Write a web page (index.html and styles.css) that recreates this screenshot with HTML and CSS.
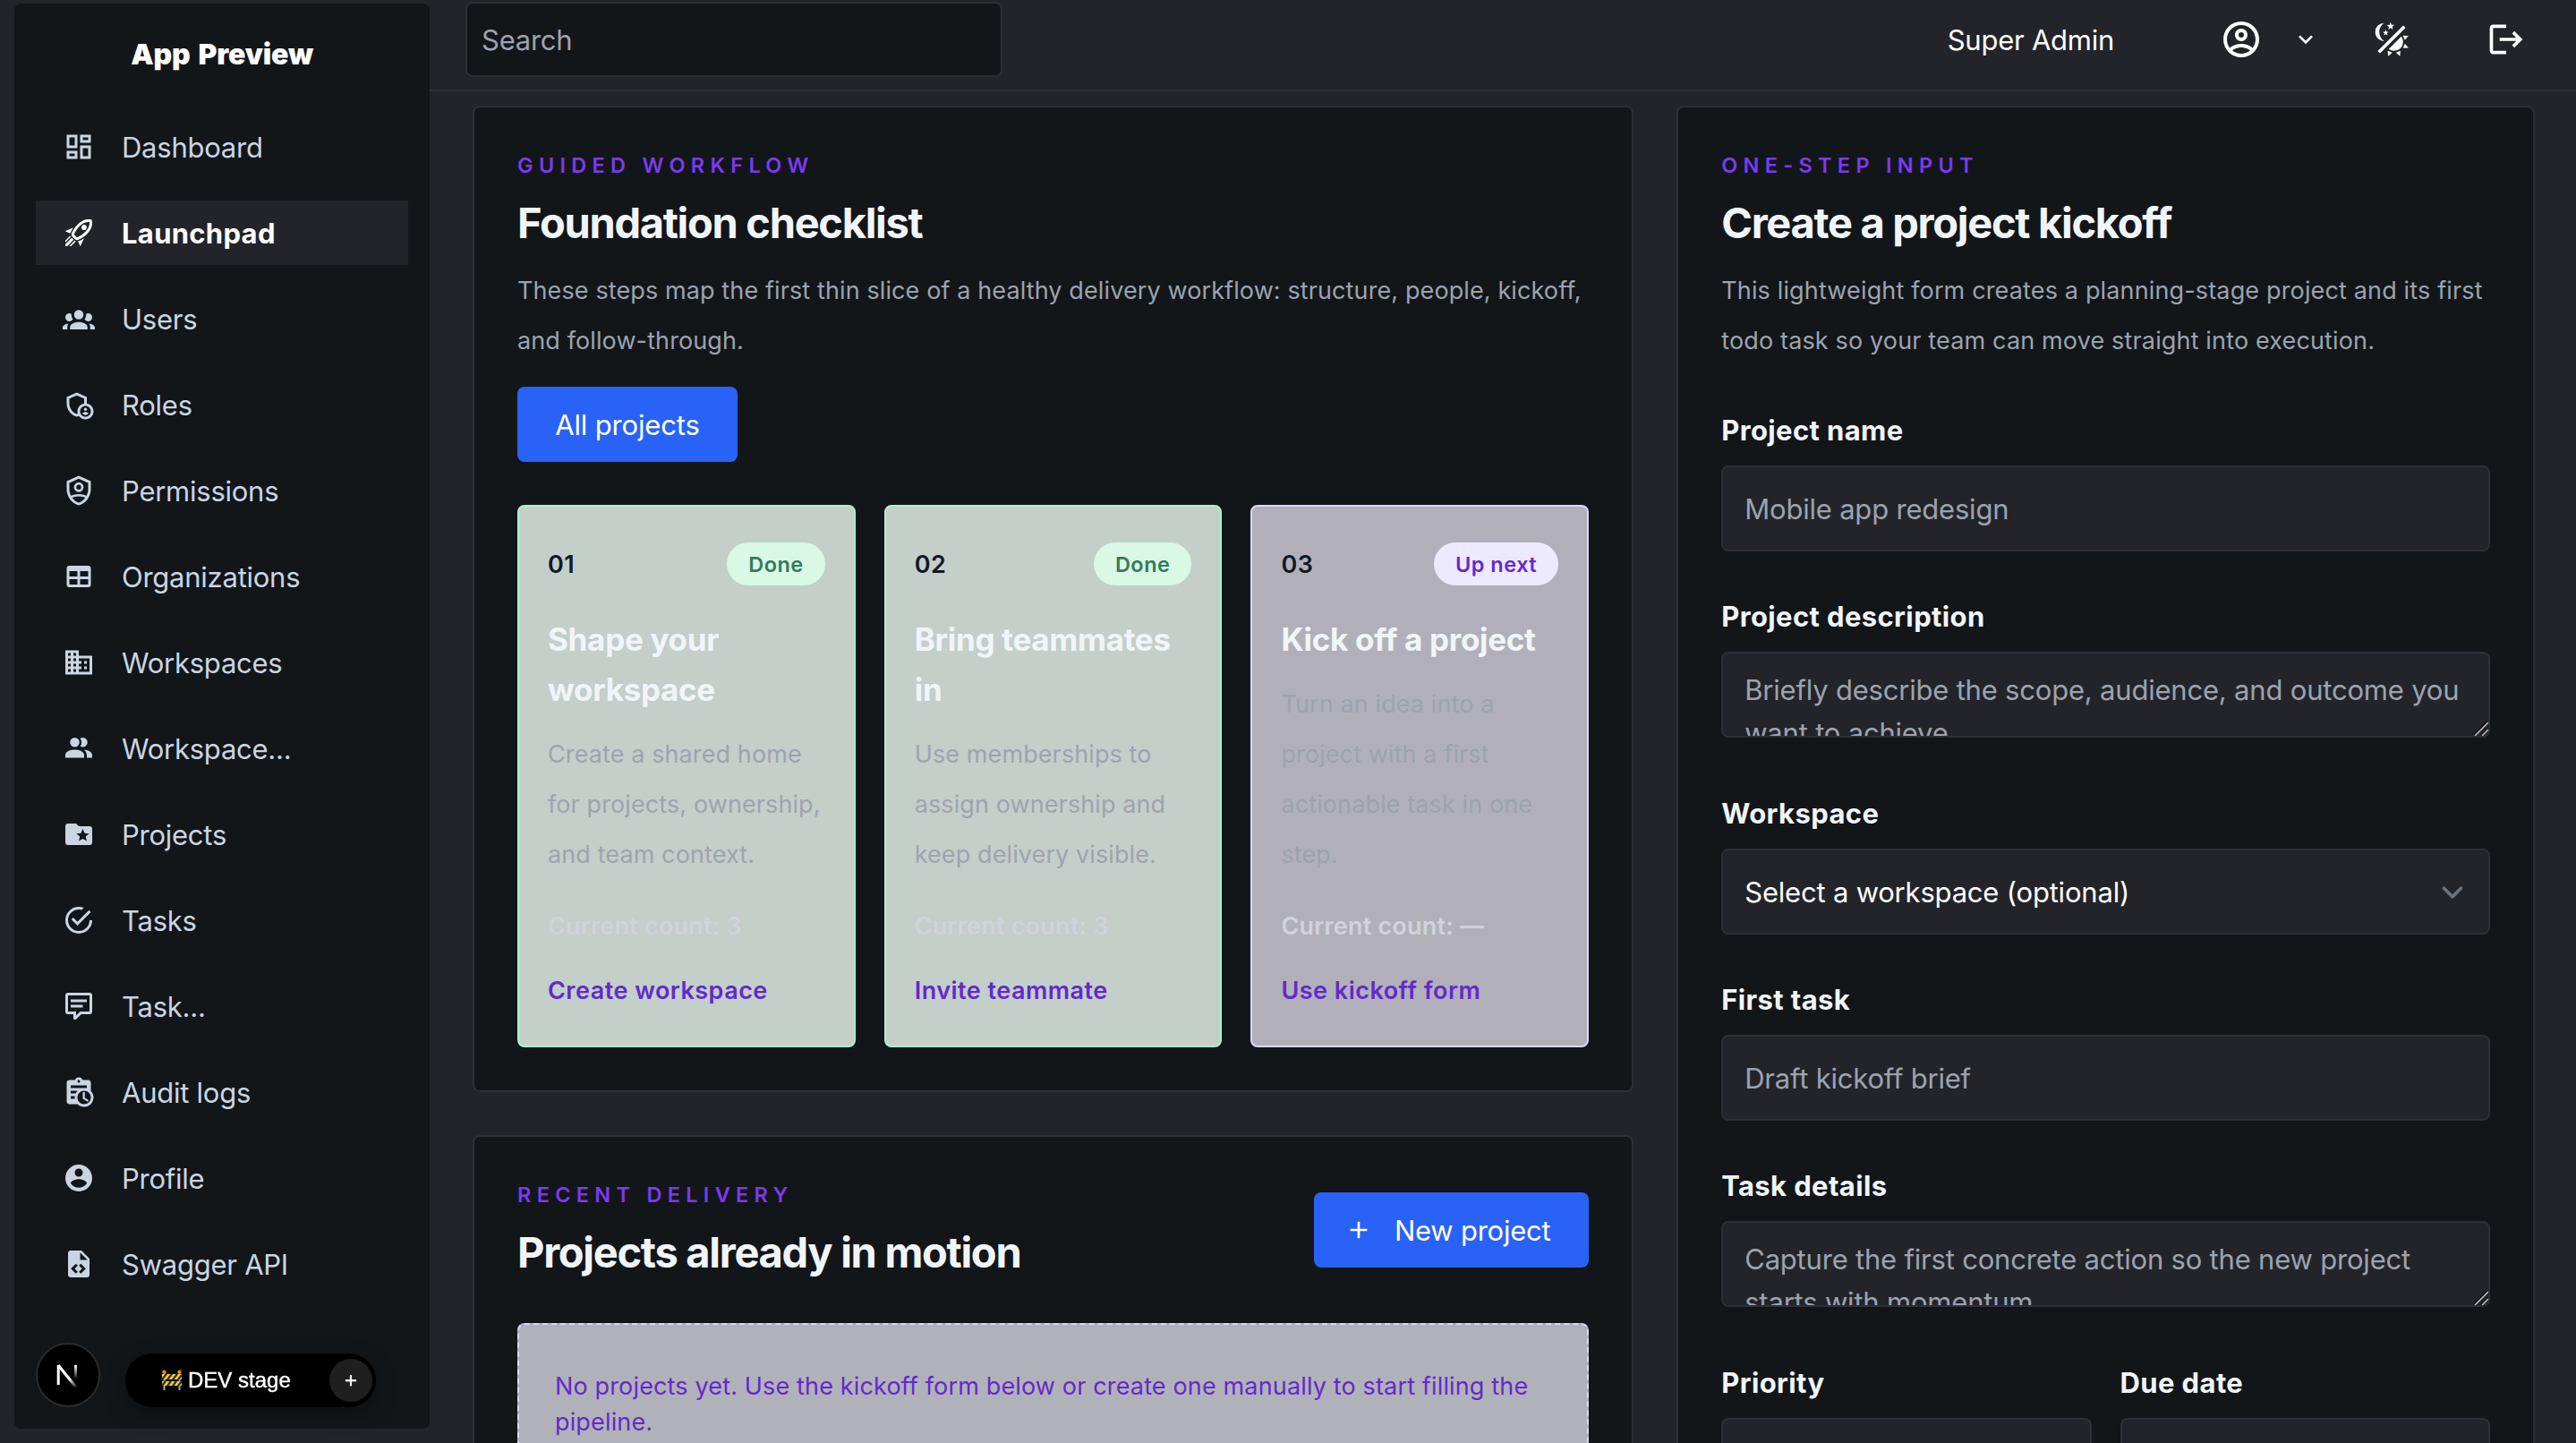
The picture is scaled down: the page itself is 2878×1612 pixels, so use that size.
FILE: index.html
```html
<!DOCTYPE html>
<html lang="en">
<head>
    <meta charset="UTF-8">
    <meta name="viewport" content="width=device-width, initial-scale=1.0">
    <title>Launchpad</title>
    <link rel="stylesheet" href="styles.css">
</head>
<body>
    <aside class="sidebar">
        <div class="brand">App Preview</div>
        <nav class="menu">
            <a class="menu-item">
                <svg class="icon" viewBox="0 0 24 24"><path d="M19,5V7H15V5H19M9,5V11H5V5H9M19,13V19H15V13H19M9,17V19H5V17H9M21,3H13V9H21V3M11,3H3V13H11V3M21,11H13V21H21V11M11,15H3V21H11V15Z"/></svg>
                <span>Dashboard</span>
            </a>
            <a class="menu-item active">
                <svg class="icon" viewBox="0 0 24 24"><path d="M13.13 22.19L11.5 18.36C13.07 17.78 14.54 17 15.9 16.09L13.13 22.19M5.64 12.5L1.81 10.87L7.91 8.1C7 9.46 6.22 10.93 5.64 12.5M19.22 4C19.5 4 19.75 4 19.96 4.05C20.13 5.44 19.94 8.3 16.66 11.58C14.96 13.29 12.93 14.6 10.65 15.47L8.5 13.37C9.42 11.06 10.73 9.03 12.42 7.34C15.18 4.58 17.64 4 19.22 4M19.22 2C17.24 2 14.24 2.69 11 5.93C8.81 8.12 7.5 10.53 6.65 12.64C6.37 13.39 6.56 14.21 7.11 14.77L9.24 16.89C9.62 17.27 10.13 17.5 10.66 17.5C10.89 17.5 11.13 17.44 11.36 17.35C13.5 16.53 15.88 15.19 18.07 13C23.73 7.34 21.61 2.39 21.61 2.39S20.7 2 19.22 2M14.54 9.46C13.76 8.68 13.76 7.41 14.54 6.63S16.59 5.85 17.37 6.63C18.14 7.41 18.15 8.68 17.37 9.46C16.59 10.24 15.32 10.24 14.54 9.46M6.24 22L9.88 18.36C9.54 18.27 9.21 18.12 8.91 17.91L4.83 22H6.24M2 22H3.41L8.18 17.24L6.76 15.83L2 20.59V22M2 19.17L6.09 15.09C5.88 14.79 5.73 14.47 5.64 14.12L2 17.76V19.17Z"/></svg>
                <span>Launchpad</span>
            </a>
            <a class="menu-item">
                <svg class="icon" viewBox="0 0 24 24"><path d="M12,5.5A3.5,3.5 0 0,1 15.5,9A3.5,3.5 0 0,1 12,12.5A3.5,3.5 0 0,1 8.5,9A3.5,3.5 0 0,1 12,5.5M5,8C5.56,8 6.08,8.15 6.53,8.42C6.38,9.85 6.8,11.27 7.66,12.38C7.16,13.34 6.16,14 5,14A3,3 0 0,1 2,11A3,3 0 0,1 5,8M19,8A3,3 0 0,1 22,11A3,3 0 0,1 19,14C17.84,14 16.84,13.34 16.34,12.38C17.2,11.27 17.62,9.85 17.47,8.42C17.92,8.15 18.44,8 19,8M5.5,18.25C5.5,16.18 8.41,14.5 12,14.5C15.59,14.5 18.5,16.18 18.5,18.25V20H5.5V18.25M0,20V18.5C0,17.11 1.89,15.94 4.45,15.6C3.86,16.28 3.5,17.22 3.5,18.25V20H0M24,20H20.5V18.25C20.5,17.22 20.14,16.28 19.55,15.6C22.11,15.94 24,17.11 24,18.5V20Z"/></svg>
                <span>Users</span>
            </a>
            <a class="menu-item">
                <svg class="icon" viewBox="0 0 24 24"><path fill-rule="evenodd" d="M18,11.09V6.27L10.5,3L3,6.27v4.91c0,4.54 3.2,8.79 7.5,9.82c.55-.13 1.08-.32 1.6-.55C13.18,21.99 14.97,23 17,23c3.31,0 6-2.69 6-6C23,14.03 20.84,11.57 18,11.09zM11,17c0,.56 .08,1.11 .23,1.62c-.24,.11-.48,.22-.73,.3c-3.17-1-5.5-4.24-5.5-7.74v-3.6l5.5-2.4l5.5,2.4v3.51C13.16,11.57 11,14.03 11,17zM17,21c-2.21,0-4-1.79-4-4s1.79-4 4-4s4,1.79 4,4S19.21,21 17,21z"/><circle cx="17" cy="15.5" r="1.12"/><path d="M17,17.5c-.73,0-2.19,.36-2.24,1.08c.5,.71 1.32,1.17 2.24,1.17s1.74-.46 2.24-1.17C19.19,17.86 17.73,17.5 17,17.5z"/></svg>
                <span>Roles</span>
            </a>
            <a class="menu-item">
                <svg class="icon" viewBox="0 0 24 24"><path fill-rule="evenodd" d="M21,11C21,16.55 17.16,21.74 12,23C6.84,21.74 3,16.55 3,11V5L12,1L21,5V11M12,21C15.75,20 19,15.54 19,11.22V6.3L12,3.18L5,6.3V11.22C5,15.54 8.25,20 12,21Z"/><circle class="line" cx="12" cy="9.5" r="2.7"/><path class="line" d="M6 17.2C7.4 16 10 15.5 12 15.5S16.6 16 18 17.2"/></svg>
                <span>Permissions</span>
            </a>
            <a class="menu-item">
                <svg class="icon" viewBox="0 0 24 24"><path d="M5,4H19A2,2 0 0,1 21,6V18A2,2 0 0,1 19,20H5A2,2 0 0,1 3,18V6A2,2 0 0,1 5,4M5,8V12H11V8H5M13,8V12H19V8H13M5,14V18H11V14H5M13,14V18H19V14H13Z"/></svg>
                <span>Organizations</span>
            </a>
            <a class="menu-item">
                <svg class="icon" viewBox="0 0 24 24"><path d="M18,15H16V17H18M18,11H16V13H18M20,19H12V17H14V15H12V13H14V11H12V9H20M10,7H8V5H10M10,11H8V9H10M10,15H8V13H10M10,19H8V17H10M6,7H4V5H6M6,11H4V9H6M6,15H4V13H6M6,19H4V17H6M12,7V3H2V21H22V7H12Z"/></svg>
                <span>Workspaces</span>
            </a>
            <a class="menu-item">
                <svg class="icon" viewBox="0 0 24 24"><path d="M16 17V19H2V17S2 13 9 13 16 17 16 17M12.5 7.5A3.5 3.5 0 1 0 9 11A3.5 3.5 0 0 0 12.5 7.5M15.94 13A5.32 5.32 0 0 1 18 17V19H22V17S22 13.37 15.94 13M15 4A3.39 3.39 0 0 0 13.07 4.59A5 5 0 0 1 13.07 10.41A3.39 3.39 0 0 0 15 11A3.5 3.5 0 0 0 15 4Z"/></svg>
                <span>Workspace...</span>
            </a>
            <a class="menu-item">
                <svg class="icon" viewBox="0 0 24 24"><path d="M20,6H12L10,4H4A2,2 0 0,0 2,6V18A2,2 0 0,0 4,20H20A2,2 0 0,0 22,18V8A2,2 0 0,0 20,6M17.94,17L15,15.28L12.06,17L12.84,13.67L10.25,11.43L13.66,11.14L15,8L16.34,11.14L19.75,11.43L17.16,13.67L17.94,17Z"/></svg>
                <span>Projects</span>
            </a>
            <a class="menu-item">
                <svg class="icon" viewBox="0 0 24 24"><path d="M20,12A8,8 0 0,1 12,20A8,8 0 0,1 4,12A8,8 0 0,1 12,4C12.76,4 13.5,4.11 14.2,4.31L15.77,2.74C14.61,2.26 13.34,2 12,2A10,10 0 0,0 2,12A10,10 0 0,0 12,22A10,10 0 0,0 22,12M7.91,10.08L6.5,11.5L11,16L21,6L19.59,4.58L11,13.17L7.91,10.08Z"/></svg>
                <span>Tasks</span>
            </a>
            <a class="menu-item">
                <svg class="icon" viewBox="0 0 24 24"><path d="M9,22A1,1 0 0,1 8,21V18H4A2,2 0 0,1 2,16V4C2,2.89 2.9,2 4,2H20A2,2 0 0,1 22,4V16A2,2 0 0,1 20,18H13.9L10.2,21.71C10,21.9 9.75,22 9.5,22V22H9M10,16V19.08L13.08,16H20V4H4V16H10M6,7H18V9H6V7M6,11H15V13H6V11Z"/></svg>
                <span>Task...</span>
            </a>
            <a class="menu-item">
                <svg class="icon" viewBox="0 0 24 24"><path fill-rule="evenodd" d="M21 11.11V5C21 3.9 20.11 3 19 3H14.82C14.4 1.84 13.3 1 12 1S9.6 1.84 9.18 3H5C3.9 3 3 3.9 3 5V19C3 20.11 3.9 21 5 21H11.11C12.37 22.24 14.09 23 16 23C19.87 23 23 19.87 23 16C23 14.09 22.24 12.37 21 11.11M12 3C12.55 3 13 3.45 13 4S12.55 5 12 5 11 4.55 11 4 11.45 3 12 3M6 7H18V9H6V7M6 11H11.1C10.5 11.6 10 12.3 9.68 13H6V11M6 15H9.08C9 15.7 9 16.3 9.08 17H6V15M16 21C13.24 21 11 18.76 11 16S13.24 11 16 11 21 13.24 21 16 18.76 21 16 21M16.5 16.25L19.36 17.94L18.61 19.16L15 17V12H16.5V16.25Z"/></svg>
                <span>Audit logs</span>
            </a>
            <a class="menu-item">
                <svg class="icon" viewBox="0 0 24 24"><path d="M12,19.2C9.5,19.2 7.29,17.92 6,16C6.03,14 10,12.9 12,12.9C14,12.9 17.97,14 18,16C16.71,17.92 14.5,19.2 12,19.2M12,5A3,3 0 0,1 15,8A3,3 0 0,1 12,11A3,3 0 0,1 9,8A3,3 0 0,1 12,5M12,2A10,10 0 0,0 2,12A10,10 0 0,0 12,22A10,10 0 0,0 22,12C22,6.47 17.5,2 12,2Z"/></svg>
                <span>Profile</span>
            </a>
            <a class="menu-item">
                <svg class="icon" viewBox="0 0 24 24"><path d="M13,9H18.5L13,3.5V9M6,2H14L20,8V20A2,2 0 0,1 18,22H6C4.89,22 4,21.1 4,20V4C4,2.89 4.89,2 6,2M6.12,15.5L9.86,19.24L11.28,17.83L8.95,15.5L11.28,13.17L9.86,11.76L6.12,15.5M17.28,15.5L13.54,11.76L12.12,13.17L14.45,15.5L12.12,17.83L13.54,19.24L17.28,15.5Z"/></svg>
                <span>Swagger API</span>
            </a>
        </nav>
    </aside>

    <div class="page">
        <header class="topbar">
            <input class="search" type="text" placeholder="Search">
            <div class="actions">
                <span class="username">Super Admin</span>
                <svg class="icon avatar" viewBox="0 0 24 24"><path d="M12,2A10,10 0 0,0 2,12A10,10 0 0,0 12,22A10,10 0 0,0 22,12A10,10 0 0,0 12,2M7.07,18.28C7.5,17.38 10.12,16.5 12,16.5C13.88,16.5 16.5,17.38 16.93,18.28C15.57,19.36 13.86,20 12,20C10.14,20 8.43,19.36 7.07,18.28M18.36,16.83C16.93,15.09 13.46,14.5 12,14.5C10.54,14.5 7.07,15.09 5.64,16.83C4.62,15.5 4,13.82 4,12C4,7.59 7.59,4 12,4C16.41,4 20,7.59 20,12C20,13.82 19.38,15.5 18.36,16.83M12,6C10.06,6 8.5,7.56 8.5,9.5C8.5,11.44 10.06,13 12,13C13.94,13 15.5,11.44 15.5,9.5C15.5,7.56 13.94,6 12,6M12,11A1.5,1.5 0 0,1 10.5,9.5A1.5,1.5 0 0,1 12,8A1.5,1.5 0 0,1 13.5,9.5A1.5,1.5 0 0,1 12,11Z"/></svg>
                <svg class="icon caret" viewBox="0 0 24 24"><path d="M7.41,8.58L12,13.17L16.59,8.58L18,10L12,16L6,10L7.41,8.58Z"/></svg>
                <svg class="icon theme" viewBox="0 0 24 24"><path d="M7.5,2C5.71,3.15 4.5,5.18 4.5,7.5C4.5,9.82 5.71,11.85 7.53,13C4.46,13 2,10.54 2,7.5A5.5,5.5 0 0,1 7.5,2M19.07,3.5L20.5,4.93L4.93,20.5L3.5,19.07L19.07,3.5M12.89,5.93L11.41,5L9.97,6L10.39,4.3L9,3.24L10.75,3.12L11.33,1.47L12,3.1L13.73,3.13L12.38,4.26L12.89,5.93M9.59,9.54L8.43,8.81L7.31,9.59L7.65,8.27L6.56,7.44L7.92,7.35L8.37,6.06L8.88,7.33L10.24,7.36L9.19,8.23L9.59,9.54M19,13.5A5.5,5.5 0 0,1 13.5,19C12.28,19 11.15,18.6 10.24,17.93L17.93,10.24C18.6,11.15 19,12.28 19,13.5M14.6,20.08L17.37,18.93L17.13,22.28L14.6,20.08M18.93,17.38L20.08,14.61L22.28,17.15L18.93,17.38M20.08,12.42L18.94,9.64L22.28,9.88L20.08,12.42M9.63,18.93L12.4,20.08L9.87,22.27L9.63,18.93Z"/></svg>
                <svg class="icon logout" viewBox="0 0 24 24"><path d="M17 7L15.59 8.41L18.17 11H8V13H18.17L15.59 15.58L17 17L22 12M4 5H12V3H4C2.9 3 2 3.9 2 5V19C2 20.1 2.9 21 4 21H12V19H4V5Z"/></svg>
            </div>
        </header>

        <main class="content">
            <div class="column">
                <section class="card">
                    <p class="eyebrow">Guided workflow</p>
                    <h2 class="card-title">Foundation checklist</h2>
                    <p class="card-text">These steps map the first thin slice of a healthy delivery workflow: structure, people, kickoff, and follow-through.</p>
                    <a class="btn">All projects</a>
                    <div class="steps">
                        <div class="step done">
                            <div class="step-head">
                                <span class="step-number">01</span>
                                <span class="badge">Done</span>
                            </div>
                            <h3 class="step-title">Shape your workspace</h3>
                            <p class="step-text">Create a shared home for projects, ownership, and team context.</p>
                            <p class="step-count">Current count: 3</p>
                            <a class="step-link">Create workspace</a>
                        </div>
                        <div class="step done">
                            <div class="step-head">
                                <span class="step-number">02</span>
                                <span class="badge">Done</span>
                            </div>
                            <h3 class="step-title">Bring teammates in</h3>
                            <p class="step-text">Use memberships to assign ownership and keep delivery visible.</p>
                            <p class="step-count">Current count: 3</p>
                            <a class="step-link">Invite teammate</a>
                        </div>
                        <div class="step next">
                            <div class="step-head">
                                <span class="step-number">03</span>
                                <span class="badge">Up next</span>
                            </div>
                            <h3 class="step-title">Kick off a project</h3>
                            <p class="step-text">Turn an idea into a project with a first actionable task in one step.</p>
                            <p class="step-count">Current count: —</p>
                            <a class="step-link">Use kickoff form</a>
                        </div>
                    </div>
                </section>

                <section class="card">
                    <div class="card-head">
                        <div>
                            <p class="eyebrow">Recent delivery</p>
                            <h2 class="card-title">Projects already in motion</h2>
                        </div>
                        <a class="btn btn-new">
                            <svg class="icon plus" viewBox="0 0 24 24"><path d="M19,13H13V19H11V13H5V11H11V5H13V11H19V13Z"/></svg>
                            <span>New project</span>
                        </a>
                    </div>
                    <div class="empty">No projects yet. Use the kickoff form below or create one manually to start filling the pipeline.</div>
                </section>
            </div>

            <section class="card kickoff">
                <p class="eyebrow">One-step input</p>
                <h2 class="card-title">Create a project kickoff</h2>
                <p class="card-text">This lightweight form creates a planning-stage project and its first todo task so your team can move straight into execution.</p>
                <form class="form">
                    <div class="field">
                        <label class="label">Project name</label>
                        <input class="control" type="text" placeholder="Mobile app redesign">
                    </div>
                    <div class="field field-area">
                        <label class="label">Project description</label>
                        <div class="area">
                            <textarea class="control" placeholder="Briefly describe the scope, audience, and outcome you want to achieve."></textarea>
                            <svg class="grip" viewBox="0 0 16 16"><path class="grip-dark" d="M0 15L15 0M8 16L16 8"/><path class="grip-light" d="M1 16L16 1M9 16L16 9"/></svg>
                        </div>
                    </div>
                    <div class="field">
                        <label class="label">Workspace</label>
                        <div class="control select">
                            <span>Select a workspace (optional)</span>
                            <svg class="select-arrow" viewBox="0 0 20 20"><path d="M6 8l4 4 4-4"/></svg>
                        </div>
                    </div>
                    <div class="field">
                        <label class="label">First task</label>
                        <input class="control" type="text" placeholder="Draft kickoff brief">
                    </div>
                    <div class="field field-area">
                        <label class="label">Task details</label>
                        <div class="area">
                            <textarea class="control" placeholder="Capture the first concrete action so the new project starts with momentum."></textarea>
                            <svg class="grip" viewBox="0 0 16 16"><path class="grip-dark" d="M0 15L15 0M8 16L16 8"/><path class="grip-light" d="M1 16L16 1M9 16L16 9"/></svg>
                        </div>
                    </div>
                    <div class="field-row">
                        <div class="field">
                            <label class="label">Priority</label>
                            <div class="control select"></div>
                        </div>
                        <div class="field">
                            <label class="label">Due date</label>
                            <input class="control" type="text">
                        </div>
                    </div>
                </form>
            </section>
        </main>
    </div>

    <!-- floating dev tools -->
    <div class="devtools">
        <div class="next-badge">
            <svg viewBox="0 0 40 40">
                <defs>
                    <linearGradient id="diagonal" gradientUnits="userSpaceOnUse" x1="22" y1="24" x2="30" y2="34"><stop stop-color="#fff"/><stop offset="1" stop-color="#fff" stop-opacity="0"/></linearGradient>
                    <linearGradient id="stem" gradientUnits="userSpaceOnUse" x1="0" y1="9" x2="0" y2="25"><stop stop-color="#fff"/><stop offset="1" stop-color="#fff" stop-opacity="0"/></linearGradient>
                </defs>
                <path d="M9.2 31V9" stroke="#fff" stroke-width="3"/>
                <path d="M9 9L30 35" stroke="url(#diagonal)" stroke-width="3.2"/>
                <path d="M28.5 9V25" stroke="url(#stem)" stroke-width="3"/>
            </svg>
        </div>
        <div class="stage">
            <svg class="barrier" viewBox="0 0 24 24">
                <path d="M3.5 7V23M20.5 7V23" stroke="#a9a9a9" stroke-width="2"/>
                <path d="M1 5H23V11H1zM1 13H23V18H1z" fill="#f6cf3c"/>
                <path d="M1 11L6 5M7 11L12 5M13 11L18 5M19 11L23 6M1 18L5 13M7 18L11 13M13 18L17 13M19 18L23 13" stroke="#2d2b26" stroke-width="2.2"/>
                <circle cx="3.5" cy="2.8" r="2.2" fill="#f5822a"/>
                <circle cx="20.5" cy="2.8" r="2.2" fill="#f5822a"/>
            </svg>
            <span class="stage-name">DEV stage</span>
            <span class="stage-add">+</span>
        </div>
    </div>
</body>
</html>
```
FILE: styles.css
```css
*{
    margin: 0;
    padding: 0;
    box-sizing: border-box;
}
body{
    display: flex;
    height: 1612px;
    overflow: hidden;
    background: #232429;
    color: #fff;
    font-family: Inter, "Liberation Sans", sans-serif;
    font-size: 31px;
    letter-spacing: -0.25px;
}
.icon{
    width: 36px;
    height: 36px;
    fill: currentColor;
    flex-shrink: 0;
}
.icon .line{
    fill: none;
    stroke: currentColor;
    stroke-width: 1.8;
}

/* sidebar */
.sidebar{
    width: 464px;
    height: 1592px;
    margin: 4px 0 0 16px;
    background: #121619;
    border-radius: 8px;
    flex-shrink: 0;
}
.brand{
    height: 112px;
    line-height: 113px;
    text-align: center;
    font-size: 32px;
    font-weight: 900;
    letter-spacing: -0.2px;
    word-spacing: 3px;
}
.menu{
    display: flex;
    flex-direction: column;
    gap: 24px;
    padding: 12px 24px;
}
.menu-item{
    display: flex;
    align-items: center;
    gap: 30px;
    height: 72px;
    padding-left: 30px;
    color: #cbd5e1;
}
.menu-item.active{
    background: #232429;
    color: #fff;
    font-weight: 700;
    letter-spacing: 0.3px;
}

/* top bar */
.page{
    flex: 1;
    min-width: 0;
    height: 1612px;
    overflow: hidden;
}
.topbar{
    display: flex;
    justify-content: space-between;
    align-items: flex-start;
    height: 102px;
    padding: 2px 56px 0 40px;
    border-bottom: 2px solid #2c2f36;
}
.search{
    width: 600px;
    height: 84px;
    padding: 0 16px;
    background: #121619;
    border: 2px solid #2c2f36;
    border-radius: 8px;
    font: inherit;
    letter-spacing: inherit;
    color: #fff;
}
.search::placeholder{
    color: #9ca3af;
}
.actions{
    display: flex;
    align-items: center;
    height: 84px;
}
.avatar{
    width: 48px;
    height: 48px;
    margin-left: 118px;
}
.caret{
    width: 32px;
    height: 32px;
    margin-left: 32px;
}
.theme,.logout{
    width: 44px;
    height: 44px;
}
.theme{
    margin-left: 58px;
}
.logout{
    margin-left: 84px;
}

/* cards */
.content{
    display: grid;
    grid-template-columns: 1.15fr .85fr;
    gap: 48px;
    align-items: start;
    padding: 16px 46px 0 48px;
}
.column{
    display: flex;
    flex-direction: column;
    gap: 48px;
}
.card{
    padding: 49px 48px 48px;
    background: #121619;
    border: 2px solid #2c2f36;
    border-radius: 8px;
}
.eyebrow{
    line-height: 32px;
    font-size: 23.5px;
    font-weight: 600;
    letter-spacing: 6.3px;
    text-transform: uppercase;
    color: #7c3aed;
}
.card-title{
    margin-top: 16px;
    line-height: 64px;
    font-size: 47px;
    font-weight: 650;
    letter-spacing: -1.3px;
    color: #f1f5f9;
}
.card-text{
    margin-top: 16px;
    line-height: 56px;
    font-size: 27px;
    letter-spacing: 0.11px;
    color: #9ca3af;
}
.kickoff .card-text{
    letter-spacing: 0.15px;
}
.card-head{
    display: flex;
    justify-content: space-between;
    align-items: center;
}
.btn{
    display: inline-flex;
    align-items: center;
    justify-content: center;
    width: 246px;
    height: 84px;
    background: #2962f6;
    border-radius: 8px;
}
.card > .btn{
    margin-top: 23px;
    vertical-align: top;
    letter-spacing: -0.15px;
}
.btn-new{
    width: 307px;
    gap: 24px;
    margin-bottom: 2px;
    padding-right: 9px;
}
.plus{
    width: 32px;
    height: 32px;
}

/* checklist */
.steps{
    display: grid;
    grid-template-columns: repeat(3, 1fr);
    gap: 32px;
    margin-top: 48px;
}
.step{
    height: 606px;
    padding: 40px 32px;
    border: 2px solid;
    border-radius: 8px;
    font-size: 27px;
    letter-spacing: 0.1px;
}
.step.done{
    background: #c3cfc8;
    border-color: #a7f3d0;
}
.step.next{
    background: #b1b0ba;
    border-color: #ddd6fe;
}
.step-head{
    display: flex;
    justify-content: space-between;
    align-items: center;
}
.step-number{
    font-weight: 600;
    letter-spacing: 0.5px;
    color: #111827;
}
.badge{
    padding: 0 24px;
    line-height: 49px;
    height: 48px;
    border-radius: 24px;
    font-size: 23.5px;
    font-weight: 600;
    letter-spacing: 0.5px;
}
.done .badge{
    background: #d9f8e5;
    color: #347a5b;
}
.next .badge{
    background: #ede9fe;
    color: #6429cd;
}
.step-title{
    margin-top: 32px;
    line-height: 56px;
    font-size: 35px;
    font-weight: 650;
    letter-spacing: -0.3px;
    color: #f1f5f9;
}
.step-text{
    margin-top: 17px;
    line-height: 56px;
    color: #9ca3af;
}
.done .step-text{
    color: #a0a3b0;
}
.step-count{
    margin-top: 32px;
    line-height: 40px;
    font-weight: 600;
    letter-spacing: 0.2px;
    color: #d1d3dc;
}
.step-link{
    display: block;
    margin-top: 32px;
    line-height: 40px;
    font-weight: 600;
    letter-spacing: 0.48px;
    color: #6429cd;
}
.empty{
    height: 220px;
    margin-top: 47px;
    padding: 49px 40px;
    background: #b1b2b9;
    border: 2px dashed #ddd6fe;
    border-radius: 8px;
    line-height: 40px;
    font-size: 27px;
    letter-spacing: 0.15px;
    color: #6429cd;
}

/* kickoff form */
.form{
    margin-top: 47px;
}
.field{
    margin-bottom: 48px;
}
.field-area{
    margin-bottom: 60px;
}
.label{
    display: block;
    padding-top: 1px;
    margin-bottom: 15px;
    line-height: 48px;
    font-weight: 700;
    letter-spacing: 0.38px;
    color: #f1f5f9;
}
.control{
    display: block;
    width: 100%;
    height: 96px;
    padding: 16px 24px;
    background: #232429;
    border: 2px solid #2c2f36;
    border-radius: 8px;
    font: inherit;
    line-height: 48px;
    letter-spacing: -0.2px;
    color: #fff;
}
.control::placeholder{
    color: #9ca3af;
}
textarea.control{
    padding-top: 17px;
    resize: none;
    overflow: hidden;
}
.area{
    position: relative;
}
/* resize handle in the corner of the textarea */
.grip{
    position: absolute;
    right: 2px;
    bottom: 2px;
    width: 16px;
    height: 16px;
    fill: none;
    stroke-width: 1.5;
}
.grip-dark{
    stroke: #000;
}
.grip-light{
    stroke: #c8c8c8;
}
.select{
    display: flex;
    align-items: center;
    justify-content: space-between;
    padding: 17px 16px 15px 24px;
}
.select-arrow{
    width: 48px;
    height: 48px;
    fill: none;
    stroke: #6b7280;
    stroke-width: 1.5;
    stroke-linecap: round;
    stroke-linejoin: round;
}
.field-row{
    display: grid;
    grid-template-columns: 1fr 1fr;
    gap: 32px;
}

/* dev tools over the sidebar */
.devtools{
    position: fixed;
    left: 40px;
    bottom: 40px;
    display: flex;
    align-items: flex-end;
    gap: 28px;
    letter-spacing: 0;
}
.next-badge{
    display: flex;
    align-items: center;
    justify-content: center;
    width: 72px;
    height: 72px;
    background: #000;
    border: 2px solid #2b2b2b;
    border-radius: 50%;
}
.next-badge svg{
    width: 40px;
    height: 40px;
}
.stage{
    display: flex;
    align-items: center;
    width: 280px;
    height: 60px;
    padding: 0 4px 0 40px;
    background: #000;
    border-radius: 30px;
    box-shadow: 0 8px 24px rgba(0,0,0,0.3);
    font-family: "Liberation Sans", sans-serif;
    font-size: 24px;
    -webkit-text-stroke: 0.4px;
}
.barrier{
    width: 24px;
    height: 24px;
    margin-right: 6px;
}
.stage-add{
    margin-left: auto;
    width: 48px;
    line-height: 48px;
    border-radius: 50%;
    background: #1f1f1f;
    text-align: center;
}
```
